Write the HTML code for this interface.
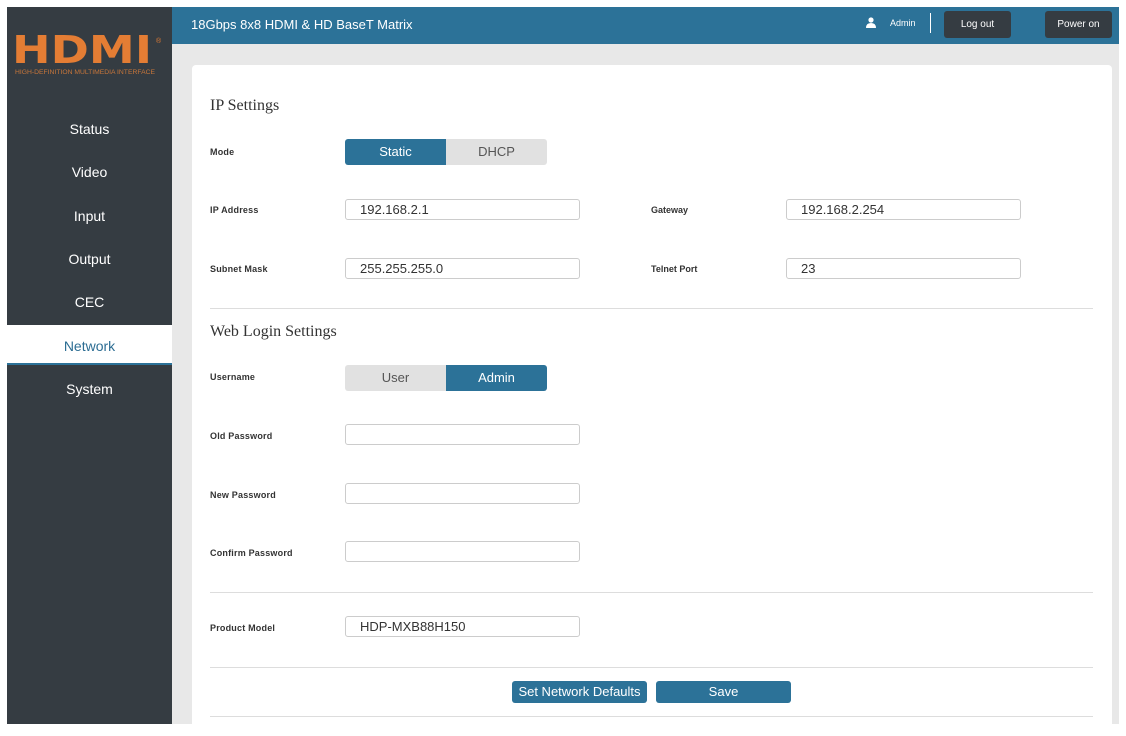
<!DOCTYPE html>
<html><head><style>
*{margin:0;padding:0;box-sizing:border-box}
body{width:1126px;height:736px;background:#fff;position:relative;overflow:hidden;font-family:"Liberation Sans",sans-serif}
.a{position:absolute}
#side{left:7px;top:7px;width:165px;height:717px;background:#353c42}
#hdr{left:172px;top:7px;width:947px;height:37px;background:#2c7298}
#main{left:172px;top:44px;width:947px;height:680px;background:#e8e8e8}
#card{left:192px;top:65px;width:920px;height:670px;background:#fff;border-radius:4px}
.nav{position:absolute;left:7px;width:165px;height:43px;line-height:43px;text-align:center;color:#fff;font-size:14px}
.lbl{position:absolute;left:210px;font-size:9px;font-weight:bold;color:#333;letter-spacing:.2px}
.lbl2{position:absolute;left:651px;font-size:9px;font-weight:bold;color:#333}
.in{position:absolute;width:235px;height:21px;border:1px solid #ccc;border-radius:3px;font-size:13px;color:#333;padding-left:14px;line-height:19px}
.h{position:absolute;left:210px;font-family:"Liberation Serif",serif;font-size:16px;color:#333}
.hr{position:absolute;left:210px;width:883px;height:1px;background:#ddd}
.seg{position:absolute;width:101px;height:26px;line-height:26px;text-align:center;font-size:13px}
.on{background:#2c7298;color:#fff}
.off{background:#e1e1e1;color:#555}
.btn{position:absolute;background:#2c7298;color:#fff;font-size:13px;text-align:center;height:22px;line-height:21px;border-radius:3px}
</style></head><body>
<div id="side" class="a"></div>
<div id="hdr" class="a"></div>
<div id="main" class="a"></div>
<div id="card" class="a"></div>
<svg class="a" style="left:10px;top:30px" width="160" height="50"><text x="2" y="33" font-family="DejaVu Sans" font-weight="bold" font-size="38" fill="#e47d34" textLength="140" lengthAdjust="spacingAndGlyphs">HDMI</text><text x="146" y="13" font-size="7" fill="#e47d34">®</text><text x="5" y="44" font-family="Liberation Sans" font-size="6" fill="#c8763a" textLength="140" lengthAdjust="spacingAndGlyphs">HIGH-DEFINITION MULTIMEDIA INTERFACE</text></svg>
<div class="nav" style="top:108px">Status</div>
<div class="nav" style="top:151px">Video</div>
<div class="nav" style="top:195px">Input</div>
<div class="nav" style="top:238px">Output</div>
<div class="nav" style="top:281px">CEC</div>
<div class="nav" style="top:325px;background:#fff;color:#2c6d93;border-bottom:2px solid #2c7298;height:40px;line-height:42px">Network</div>
<div class="nav" style="top:368px">System</div>
<div class="a" style="left:191px;top:17px;color:#fff;font-size:13px">18Gbps 8x8 HDMI &amp; HD BaseT Matrix</div>
<svg class="a" style="left:866px;top:17px" width="10" height="11" viewBox="0 0 10 11"><circle cx="5" cy="3" r="2.6" fill="#fff"/><path d="M0 11 Q0 6 5 6 Q10 6 10 11Z" fill="#fff"/></svg>
<div class="a" style="left:890px;top:18px;color:#fff;font-size:9px">Admin</div>
<div class="a" style="left:930px;top:13px;width:1px;height:20px;background:#fff"></div>
<div class="a" style="left:944px;top:11px;width:67px;height:27px;background:#353c42;border-radius:3px;color:#fff;font-size:10px;text-align:center;line-height:27px">Log out</div>
<div class="a" style="left:1045px;top:11px;width:67px;height:27px;background:#353c42;border-radius:3px;color:#fff;font-size:10px;text-align:center;line-height:27px">Power on</div>
<div class="h" style="top:97px">IP Settings</div>
<div class="lbl" style="top:147px">Mode</div>
<div class="seg on" style="left:345px;top:139px;border-radius:3px 0 0 3px">Static</div>
<div class="seg off" style="left:446px;top:139px;border-radius:0 3px 3px 0">DHCP</div>
<div class="lbl" style="top:205px">IP Address</div>
<div class="in" style="left:345px;top:199px">192.168.2.1</div>
<div class="lbl2" style="top:205px">Gateway</div>
<div class="in" style="left:786px;top:199px">192.168.2.254</div>
<div class="lbl" style="top:264px">Subnet Mask</div>
<div class="in" style="left:345px;top:258px">255.255.255.0</div>
<div class="lbl2" style="top:264px">Telnet Port</div>
<div class="in" style="left:786px;top:258px">23</div>
<div class="hr" style="top:308px"></div>
<div class="h" style="top:323px">Web Login Settings</div>
<div class="lbl" style="top:372px">Username</div>
<div class="seg off" style="left:345px;top:365px;border-radius:3px 0 0 3px">User</div>
<div class="seg on" style="left:446px;top:365px;border-radius:0 3px 3px 0">Admin</div>
<div class="lbl" style="top:431px">Old Password</div>
<div class="in" style="left:345px;top:424px"></div>
<div class="lbl" style="top:490px">New Password</div>
<div class="in" style="left:345px;top:483px"></div>
<div class="lbl" style="top:548px">Confirm Password</div>
<div class="in" style="left:345px;top:541px"></div>
<div class="hr" style="top:592px"></div>
<div class="lbl" style="top:623px">Product Model</div>
<div class="in" style="left:345px;top:616px">HDP-MXB88H150</div>
<div class="hr" style="top:667px"></div>
<div class="btn" style="left:512px;top:681px;width:135px">Set Network Defaults</div>
<div class="btn" style="left:656px;top:681px;width:135px">Save</div>
<div class="hr" style="top:716px"></div>
<div class="a" style="left:172px;top:724px;width:954px;height:12px;background:#fff"></div>
</body></html>
